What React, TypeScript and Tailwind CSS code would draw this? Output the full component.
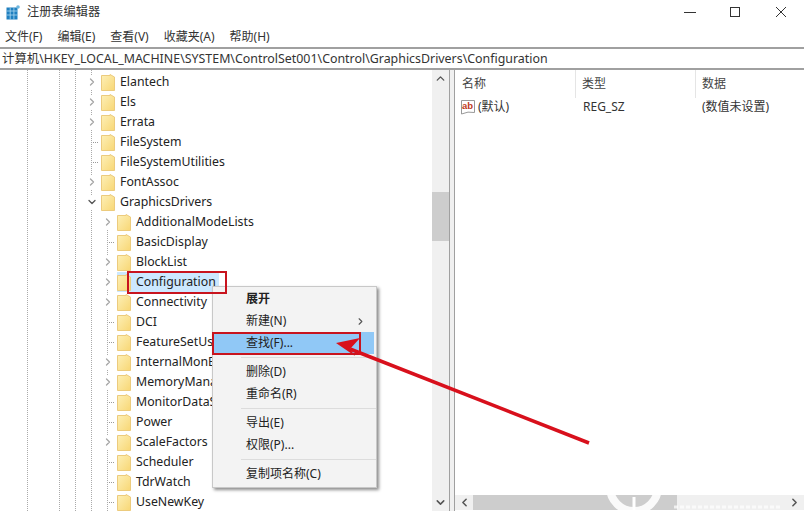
import React from "react";
import { ChevronRight, ChevronDown, ChevronUp, ChevronLeft } from "lucide-react";

const FONT = "font-['Noto_Sans','Noto_Sans_CJK_SC',sans-serif]";

function Folder() {
  return (
    <svg width="14" height="17" viewBox="0 0 14 17" className="shrink-0">
      <defs>
        <linearGradient id="fg" x1="0" y1="0" x2="1" y2="1">
          <stop offset="0" stopColor="#fdf0b8" />
          <stop offset="1" stopColor="#f8d775" />
        </linearGradient>
      </defs>
      <path d="M0.5 1.5 L9 1.5 L9 0.5 L13.5 3 L13.5 16.5 L0.5 16.5 Z" fill="url(#fg)" stroke="#eccb7d" />
    </svg>
  );
}

type Row = { name: string; level: 0 | 1; arrow?: "r" | "d"; selected?: boolean };

const rows: Row[] = [
  { name: "Elantech", level: 0, arrow: "r" },
  { name: "Els", level: 0, arrow: "r" },
  { name: "Errata", level: 0, arrow: "r" },
  { name: "FileSystem", level: 0 },
  { name: "FileSystemUtilities", level: 0 },
  { name: "FontAssoc", level: 0, arrow: "r" },
  { name: "GraphicsDrivers", level: 0, arrow: "d" },
  { name: "AdditionalModeLists", level: 1, arrow: "r" },
  { name: "BasicDisplay", level: 1 },
  { name: "BlockList", level: 1, arrow: "r" },
  { name: "Configuration", level: 1, arrow: "r", selected: true },
  { name: "Connectivity", level: 1, arrow: "r" },
  { name: "DCI", level: 1 },
  { name: "FeatureSetUsage", level: 1 },
  { name: "InternalMonEdid", level: 1, arrow: "r" },
  { name: "MemoryManager", level: 1, arrow: "r" },
  { name: "MonitorDataStore", level: 1 },
  { name: "Power", level: 1 },
  { name: "ScaleFactors", level: 1, arrow: "r" },
  { name: "Scheduler", level: 1 },
  { name: "TdrWatch", level: 1 },
  { name: "UseNewKey", level: 1 },
];

function TreeRow({ r }: { r: Row }) {
  return (
    <div className={`relative flex h-5 items-center ${r.level === 0 ? "pl-[86px]" : "pl-[102px]"}`}>
      <span className={`flex h-[14px] w-[12px] shrink-0 items-center justify-center ${r.arrow ? "bg-white" : ""}`}>
        {r.arrow === "r" && <ChevronRight size={14} strokeWidth={2.6} className="text-[#a6a6a6]" />}
        {r.arrow === "d" && <ChevronDown size={14} strokeWidth={2.6} className="text-[#555]" />}
        {!r.arrow && <span className="ml-[6px] w-[5px] border-t border-dotted border-[#999]" />}
      </span>
      <span className={`ml-[3px] flex h-5 items-center ${r.selected ? "bg-[#cce8ff] pr-[3px]" : ""}`}>
        <Folder />
        <span className="ml-[5px] whitespace-nowrap text-[12.3px] text-[#222]">{r.name}</span>
      </span>
    </div>
  );
}

function MenuItem({ label, bold, sub, active }: { label: string; bold?: boolean; sub?: boolean; active?: boolean }) {
  return (
    <div className={`mr-[2px] flex h-[22px] items-center justify-between pl-[33px] pr-[8px] text-[12px] text-[#222] ${active ? "bg-[#90c8f6]" : ""} ${bold ? "font-bold" : ""}`}>
      <span>{label}</span>
      {sub && <ChevronRight size={11} strokeWidth={2.4} className="text-[#555]" />}
    </div>
  );
}

const Sep = () => <div className="my-[3px] mr-0 ml-[28px] h-px bg-[#dcdcdc]" />;

export default function App() {
  return (
    <div className={`relative flex h-[522px] w-[804px] flex-col overflow-hidden bg-white ${FONT}`}>
      {/* title bar */}
      <div className="flex h-[24px] items-center pl-[6px]">
        <svg width="14" height="15" viewBox="0 0 14 15">
          <rect x="0.5" y="2.5" width="11" height="12" fill="#2080c0" />
          <path d="M0.5 6H11.5M0.5 10H11.5M4.2 2.5V14.5M7.9 2.5V14.5" stroke="#a9d7f0" strokeWidth="0.8" />
          <circle cx="12" cy="2" r="1.8" fill="#6fb6dd" />
        </svg>
        <span className="ml-[7px] text-[12.2px] text-[#333]">注册表编辑器</span>
        <div className="ml-auto flex items-center">
          <svg width="12" height="12" viewBox="0 0 12 12" className="mr-[33px]"><path d="M0 6.5H12" stroke="#333" /></svg>
          <svg width="12" height="12" viewBox="0 0 12 12" className="mr-[34px]"><rect x="1.5" y="1.5" width="9" height="9" fill="none" stroke="#333" /></svg>
          <svg width="12" height="12" viewBox="0 0 12 12" className="mr-[17px]"><path d="M1 1L11 11M11 1L1 11" stroke="#333" /></svg>
        </div>
      </div>
      {/* menu bar */}
      <div className="flex h-[23px] items-center gap-[15px] pt-[3px] pl-[5px] text-[12px] text-[#333]">
        <span>文件(F)</span>
        <span>编辑(E)</span>
        <span>查看(V)</span>
        <span>收藏夹(A)</span>
        <span>帮助(H)</span>
      </div>
      {/* address bar */}
      <div className="flex h-[23px] items-center border-y-2 border-[#a0a0a0] pt-[1px] pl-[2px] text-[12.4px] text-[#333]">
        计算机\HKEY_LOCAL_MACHINE\SYSTEM\ControlSet001\Control\GraphicsDrivers\Configuration
      </div>

      {/* body */}
      <div className="flex h-[441px]">
        {/* tree */}
        <div className="relative w-[432px] shrink-0 overflow-hidden pt-[2px]">
          {[27, 59, 75, 91].map((x) => (
            <span key={x} className="absolute top-0 bottom-0 border-l border-dotted border-[#aaa]" style={{ left: x }} />
          ))}
          <span className="absolute top-[151px] bottom-0 left-[107px] border-l border-dotted border-[#aaa]" />
          {rows.map((r) => (
            <TreeRow key={r.name} r={r} />
          ))}
        </div>
        {/* tree scrollbar */}
        <div className="flex w-[17px] shrink-0 flex-col items-center bg-[#f0f0f0]">
          <ChevronUp size={13} strokeWidth={2.5} className="mt-[2px] text-[#555]" />
          <div className="mt-[107px] h-[49px] w-full bg-[#cdcdcd]" />
          <ChevronDown size={13} strokeWidth={2.8} className="mt-auto mb-[2px] text-[#555]" />
        </div>
        {/* splitter */}
        <div className="w-[6px] shrink-0 border-x border-[#a0a0a0] bg-[#f0f0f0]" />
        {/* list */}
        <div className="flex min-w-0 flex-1 flex-col">
          <div className="flex h-[27px] items-center text-[12px] text-[#444]">
            <span className="w-[121px] border-r border-[#e5e5e5] pl-[7px] leading-[28px]">名称</span>
            <span className="w-[120px] border-r border-[#e5e5e5] pl-[6px] leading-[28px]">类型</span>
            <span className="pl-[6px]">数据</span>
          </div>
          <div className="flex h-[20px] items-center text-[12px] text-[#333]">
            <span className="flex w-[121px] items-center pl-[5px]">
              <svg width="16" height="16" viewBox="0 0 16 16" className="shrink-0">
                <path d="M1.5 1.5H14.5V13.5Q8 12 1.5 15Z" fill="#fff" stroke="#999" />
                <text x="2" y="10" fontSize="9.5" fontWeight="700" fill="#c03a22" fontFamily="'Liberation Sans',sans-serif">ab</text>
              </svg>
              <span className="ml-[2px]">(默认)</span>
            </span>
            <span className="w-[120px] pl-[7px]">REG_SZ</span>
            <span className="pl-[6px]">(数值未设置)</span>
          </div>
          {/* h scrollbar */}
          <div className="mt-auto mb-[1px] flex h-[15px] items-center bg-[#f0f0f0]">
            <ChevronLeft size={13} strokeWidth={2.8} className="ml-[3px] text-[#555]" />
            <div className="ml-[2px] h-full w-[204px] bg-[#cdcdcd]" />
            <ChevronRight size={13} strokeWidth={2.8} className="mr-[3px] ml-auto text-[#555]" />
          </div>
        </div>
      </div>

      {/* context menu */}
      <div className="absolute top-[286px] left-[212px] h-[202px] w-[165px] border border-[#c8c8c8] bg-[#f3f3f3] py-px shadow-[2px_2px_3px_rgba(0,0,0,0.45)]">
        <MenuItem label="展开" bold />
        <MenuItem label="新建(N)" sub />
        <MenuItem label="查找(F)..." active />
        <Sep />
        <MenuItem label="删除(D)" />
        <MenuItem label="重命名(R)" />
        <Sep />
        <MenuItem label="导出(E)" />
        <MenuItem label="权限(P)..." />
        <Sep />
        <MenuItem label="复制项名称(C)" />
      </div>

      {/* red boxes */}
      <div className="absolute top-[271px] left-[127px] h-[23px] w-[100px] border-2 border-[#c8141e]" />
      <div className="absolute top-[332px] left-[212px] h-[23px] w-[149px] border-2 border-[#c8141e]" />

      {/* arrow */}
      <svg className="absolute top-0 left-0" width="804" height="522" viewBox="0 0 804 522">
        <path d="M589 443L350 349" stroke="#d8101c" strokeWidth="3.5" />
        <path d="M336 343L360 338L350 349L355 356Z" fill="#d8101c" />
      </svg>

      {/* watermark */}
      <svg className="absolute top-0 left-0" width="804" height="522" viewBox="0 0 804 522">
        <circle cx="634" cy="487" r="24" fill="none" stroke="#fff" strokeWidth="8" opacity="0.9" />
        <path d="M634 497V514" stroke="#fff" strokeWidth="3" />
        <path d="M674 507H782" stroke="#fff" strokeWidth="3" strokeDasharray="4 2" opacity="0.7" />
      </svg>
    </div>
  );
}
